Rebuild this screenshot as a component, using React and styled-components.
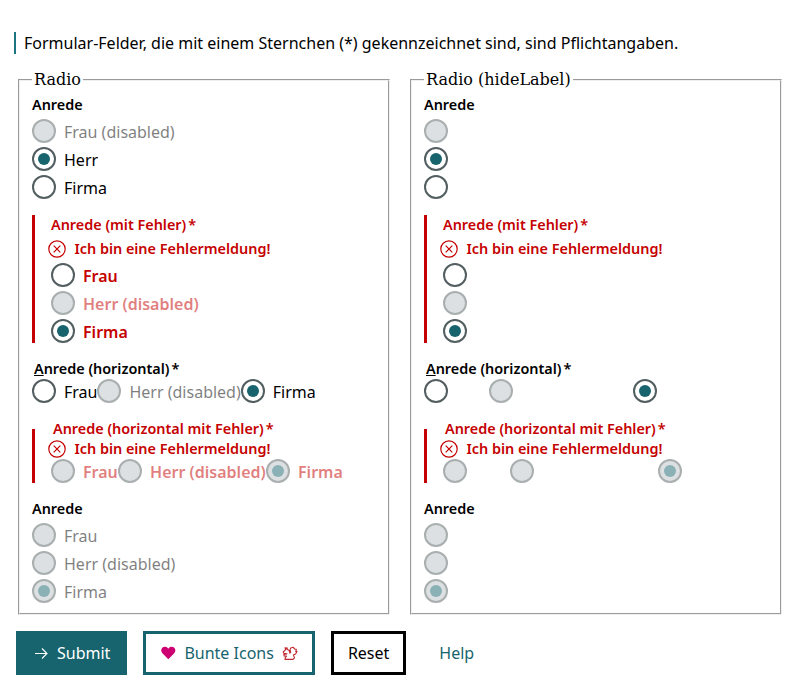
import React from 'react';
import styled, { createGlobalStyle, css } from 'styled-components';

const TEAL = '#17646e';
const RED = '#c50000';

const GlobalStyle = createGlobalStyle`
  body {
    margin: 0;
    background: #fff;
    color: #000;
    font: 16px/24px "Noto Sans", sans-serif;
  }
`;

const Page = styled.main`
  padding: 32px 16px 16px;
`;

const Hint = styled.p`
  margin: 0 0 0 -2px;
  padding-left: 8px;
  height: 22px;
  line-height: 22px;
  border-left: 2px solid #1c7482;
`;

const Columns = styled.div`
  display: grid;
  grid-template-columns: 376px 376px;
  gap: 16px;
  margin-top: 16px;
`;

const Panel = styled.fieldset`
  min-width: 0;
`;

const PanelLegend = styled.legend`
  font: 16px "DejaVu Serif", serif;
`;

const Stack = styled.div`
  display: grid;
  gap: 16px;
`;

const errorEdge = css`
  border-left: 3px solid ${RED};
  padding-left: 16px;
  color: ${RED};
`;

const Group = styled.div`
  display: grid;
  gap: 4px;
  ${(p) => p.$error && errorEdge}
`;

const InlineGroup = styled.fieldset`
  min-width: 0;
  margin: 0;
  padding: 0;
  border: 0;
  ${(p) => p.$error && errorEdge}
`;

const captionText = css`
  font-size: 14.4px;
  font-weight: 600;
  line-height: 20px;
`;

const Caption = styled.div`
  ${captionText}
`;

const InlineCaption = styled.legend`
  ${captionText}
`;

const Star = styled.span`
  margin-left: 2px;
`;

const ErrorLine = styled.div`
  ${captionText}
  display: flex;
  align-items: center;
  gap: 8px;
  margin-left: -2.6px;
  height: 20px;

  svg {
    flex: none;
  }
`;

const Options = styled.div`
  display: flex;
  gap: ${(p) => (p.$error ? '0.3px' : 0)};
`;

const Option = styled.label`
  display: flex;
  gap: 8px;
  height: 24px;
`;

const Circle = styled.span`
  box-sizing: border-box;
  flex: none;
  display: grid;
  place-items: center;
  width: 24px;
  height: 24px;
  border: 2px solid ${(p) => (p.$disabled ? '#a9aeaf' : '#535e61')};
  border-radius: 50%;
  background: ${(p) => (p.$disabled ? '#dce0e3' : '#fff')};
`;

const Dot = styled.span`
  width: 12px;
  height: 12px;
  border-radius: 50%;
  background: ${(p) => (p.$disabled ? '#8ab1b6' : TEAL)};
`;

const OptionText = styled.span`
  line-height: 26px;
  white-space: nowrap;
  font-weight: ${(p) => (p.$error ? 600 : 400)};
  opacity: ${(p) => (p.$disabled ? 0.5 : 1)};
  visibility: ${(p) => (p.$hidden ? 'hidden' : 'visible')};
`;

const Actions = styled.div`
  display: flex;
  gap: 16px;
  margin-top: 16px;
`;

const Button = styled.button`
  box-sizing: border-box;
  display: flex;
  align-items: center;
  gap: 8px;
  height: 44px;
  padding: 0 14px;
  font: inherit;
  border: 3px solid ${(p) => p.$edge};
  background: ${(p) => p.$fill || 'transparent'};
  color: ${(p) => p.$ink};
`;

const ErrorIcon = () => (
  <svg width="18" height="18" viewBox="0 0 18 18" fill="none" stroke={RED} strokeWidth="1.2">
    <circle cx="9" cy="9" r="8.2" />
    <path d="M5.7 5.7l6.6 6.6M12.3 5.7l-6.6 6.6" />
  </svg>
);

const ArrowIcon = () => (
  <svg width="16" height="16" viewBox="0 0 16 16" fill="none" stroke="#fff" strokeWidth="1.1">
    <path d="M2 8.5h12M9 3.5l5 5-5 5" />
  </svg>
);

const HeartIcon = () => (
  <svg width="16" height="16" viewBox="0 0 16 16" fill="#cc0070">
    <path d="M8.300 14.200L2.400 8.300C.7 6.600.9 3.800 2.600 2.600 4.500 1.300 6.900 1.700 8.300 3.800 9.700 1.700 12.100 1.300 14 2.600c1.700 1.200 1.900 4 .2 5.700z" />
  </svg>
);

const SquirrelIcon = () => (
  <svg width="16" height="16" viewBox="0 0 16 16" fill="none" stroke="#c1272d" strokeWidth="1.1" strokeLinejoin="round">
    <path d="M3 2.600L3.600 4.600 1.200 7 2 8.400 5 8.800 1.800 9.600 2.200 11 4.600 11.100 3.200 12.600 3 14.400H11L12.500 12.900 11.300 9.900 13.600 9 15 6.400 13.800 6.700 14.300 4.200 12.700 4 11 2.200 8.800 2.900 8 4.900 8.700 7 7.900 8.200 7.200 5.500 5.400 4.500 4.900 2.600 4.200 3.900z" />
  </svg>
);

const Radio = ({ text, disabled, checked, error, hideLabel }) => (
  <Option>
    <Circle $disabled={disabled}>{checked && <Dot $disabled={disabled} />}</Circle>
    <OptionText $disabled={disabled} $error={error} $hidden={hideLabel}>
      {text}
    </OptionText>
  </Option>
);

const ErrorMessage = () => (
  <ErrorLine>
    <ErrorIcon />
    Ich bin eine Fehlermeldung!
  </ErrorLine>
);

const RadioPanel = ({ title, hideLabel }) => (
  <Panel>
    <PanelLegend>{title}</PanelLegend>
    <Stack>
      <Group>
        <Caption>Anrede</Caption>
        <Radio text="Frau (disabled)" disabled hideLabel={hideLabel} />
        <Radio text="Herr" checked hideLabel={hideLabel} />
        <Radio text="Firma" hideLabel={hideLabel} />
      </Group>
      <Group $error>
        <Caption>
          Anrede (mit Fehler)<Star>*</Star>
        </Caption>
        <ErrorMessage />
        <Radio text="Frau" error hideLabel={hideLabel} />
        <Radio text="Herr (disabled)" error disabled hideLabel={hideLabel} />
        <Radio text="Firma" error checked hideLabel={hideLabel} />
      </Group>
      <InlineGroup>
        <InlineCaption>
          <u>A</u>nrede (horizontal)<Star>*</Star>
        </InlineCaption>
        <Options>
          <Radio text="Frau" hideLabel={hideLabel} />
          <Radio text="Herr (disabled)" disabled hideLabel={hideLabel} />
          <Radio text="Firma" checked hideLabel={hideLabel} />
        </Options>
      </InlineGroup>
      <InlineGroup $error>
        <InlineCaption>
          Anrede (horizontal mit Fehler)<Star>*</Star>
        </InlineCaption>
        <ErrorMessage />
        <Options $error>
          <Radio text="Frau" error disabled hideLabel={hideLabel} />
          <Radio text="Herr (disabled)" error disabled hideLabel={hideLabel} />
          <Radio text="Firma" error disabled checked hideLabel={hideLabel} />
        </Options>
      </InlineGroup>
      <Group>
        <Caption>Anrede</Caption>
        <Radio text="Frau" disabled hideLabel={hideLabel} />
        <Radio text="Herr (disabled)" disabled hideLabel={hideLabel} />
        <Radio text="Firma" disabled checked hideLabel={hideLabel} />
      </Group>
    </Stack>
  </Panel>
);

export default function App() {
  return (
    <Page>
      <GlobalStyle />
      <Hint>Formular-Felder, die mit einem Sternchen (*) gekennzeichnet sind, sind Pflichtangaben.</Hint>
      <Columns>
        <RadioPanel title="Radio" />
        <RadioPanel title="Radio (hideLabel)" hideLabel />
      </Columns>
      <Actions>
        <Button $edge={TEAL} $fill={TEAL} $ink="#fff">
          <ArrowIcon />
          Submit
        </Button>
        <Button $edge={TEAL} $ink={TEAL}>
          <HeartIcon />
          Bunte Icons
          <SquirrelIcon />
        </Button>
        <Button $edge="#000" $ink="#000">Reset</Button>
        <Button $edge="transparent" $ink={TEAL}>Help</Button>
      </Actions>
    </Page>
  );
}
